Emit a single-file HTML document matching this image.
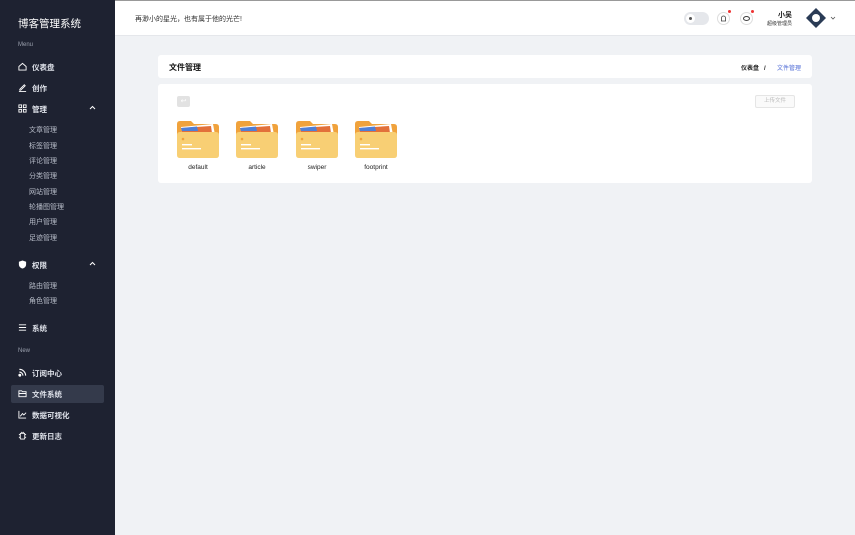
<!DOCTYPE html>
<html><head><meta charset="utf-8"><style>
*{margin:0;padding:0;box-sizing:border-box}
body{width:855px;height:535px;overflow:hidden;background:#f0f2f5;font-family:"Liberation Sans","Noto Sans CJK SC",sans-serif;position:relative}
.sb{position:absolute;left:0;top:0;width:115px;height:535px;background:#1e2231;color:#e6e8ee}
.t{position:absolute;font-size:7px;white-space:nowrap}
.sb .t{color:#dfe2ea}
.it{font-weight:bold;font-size:7.5px}
.sub{color:#b8bdc9!important;left:29px}
.ic{position:absolute;left:18px;width:9px;height:9px}
.top{position:absolute;left:115px;top:0;width:740px;height:36px;background:#fff;border-top:1px solid #999;border-bottom:1px solid #e5e7eb}
.card{position:absolute;background:#fff;border-radius:3px}
.f{position:absolute;top:121px;width:42px;height:38px}
.fl{position:absolute;top:164px;font-size:6.5px;color:#222;width:42px;text-align:center}
.chev{position:absolute;left:89px;width:7px;height:5px}
</style></head><body>
<div class="sb">
<div class="t" style="left:18px;top:16px;font-size:10.5px;color:#fff">博客管理系统</div>
<div class="t" style="left:18px;top:42px;font-size:6px;color:#9aa0ad">Menu</div>
<svg class="ic" style="top:62px" viewBox="0 0 10 10" fill="none" stroke="#fff" stroke-width="1"><path d="M1 5L5 1.5 9 5V9H1Z"/></svg>
<div class="t it" style="left:32px;top:62px">仪表盘</div>
<svg class="ic" style="top:83px" viewBox="0 0 10 10" fill="none" stroke="#fff" stroke-width="1"><path d="M2 7L7 2 8 3 3 8H2ZM1 9.5H9"/></svg>
<div class="t it" style="left:32px;top:83px">创作</div>
<svg class="ic" style="top:104px" viewBox="0 0 10 10" fill="none" stroke="#fff" stroke-width="1"><rect x="1" y="1" width="3" height="3"/><rect x="6" y="1" width="3" height="3"/><rect x="1" y="6" width="3" height="3"/><rect x="6" y="6" width="3" height="3"/></svg>
<div class="t it" style="left:32px;top:104px">管理</div>
<svg class="chev" style="top:105px" viewBox="0 0 7 5" fill="none" stroke="#fff" stroke-width="1"><path d="M1 4L3.5 1.5 6 4"/></svg>
<div class="t sub" style="top:125px">文章管理</div>
<div class="t sub" style="top:141px">标签管理</div>
<div class="t sub" style="top:156px">评论管理</div>
<div class="t sub" style="top:171px">分类管理</div>
<div class="t sub" style="top:187px">网站管理</div>
<div class="t sub" style="top:202px">轮播图管理</div>
<div class="t sub" style="top:217px">用户管理</div>
<div class="t sub" style="top:233px">足迹管理</div>
<svg class="ic" style="top:260px" viewBox="0 0 10 10"><path d="M5 .5L9 2V5C9 7.5 7 9 5 9.5 3 9 1 7.5 1 5V2Z" fill="#fff"/></svg>
<div class="t it" style="left:32px;top:260px">权限</div>
<svg class="chev" style="top:261px" viewBox="0 0 7 5" fill="none" stroke="#fff" stroke-width="1"><path d="M1 4L3.5 1.5 6 4"/></svg>
<div class="t sub" style="top:281px">路由管理</div>
<div class="t sub" style="top:296px">角色管理</div>
<svg class="ic" style="top:323px" viewBox="0 0 10 10" fill="none" stroke="#fff" stroke-width="1"><path d="M1 2H9M1 5H9M1 8H9"/></svg>
<div class="t it" style="left:32px;top:323px">系统</div>
<div class="t" style="left:18px;top:348px;font-size:6px;color:#9aa0ad">New</div>
<svg class="ic" style="top:368px" viewBox="0 0 10 10" fill="none" stroke="#fff" stroke-width="1.2"><path d="M1.5 1.5A7 7 0 0 1 8.5 8.5M1.5 4.5A4 4 0 0 1 5.5 8.5"/><circle cx="2" cy="8" r="1" fill="#fff"/></svg>
<div class="t it" style="left:32px;top:368px">订阅中心</div>
<div style="position:absolute;left:11px;top:385px;width:93px;height:18px;background:#343a4b;border-radius:2px"></div>
<svg class="ic" style="top:389px" viewBox="0 0 10 10" fill="none" stroke="#fff" stroke-width="1"><path d="M1 2H4L5 3H9V8.5H1Z M1 5H9"/></svg>
<div class="t it" style="left:32px;top:389px">文件系统</div>
<svg class="ic" style="top:410px" viewBox="0 0 10 10" fill="none" stroke="#fff" stroke-width="1"><path d="M1 1V9H9M2.5 7L5 4 6.5 5.5 9 3"/></svg>
<div class="t it" style="left:32px;top:410px">数据可视化</div>
<svg class="ic" style="top:431px" viewBox="0 0 10 10" fill="none" stroke="#fff" stroke-width="1"><rect x="2.5" y="2.5" width="5" height="6.5" rx="1"/><path d="M1 4H2.5M7.5 4H9M1 7H2.5M7.5 7H9M4 1L4.5 2.5M6 1L5.5 2.5"/></svg>
<div class="t it" style="left:32px;top:431px">更新日志</div>
</div>
<div class="top">
<div class="t" style="left:20px;top:13px;font-size:7px;color:#333">再渺小的星光，也有属于他的光芒!</div>
<div style="position:absolute;left:569px;top:11px;width:25px;height:13px;border-radius:7px;background:#e5e7eb"><div style="position:absolute;left:2px;top:2px;width:9px;height:9px;border-radius:50%;background:#fff"><div style="position:absolute;left:3px;top:3px;width:3px;height:3px;border-radius:50%;background:#555"></div></div></div>
<div style="position:absolute;left:602px;top:11px;width:13px;height:13px;border-radius:50%;border:1px solid #ddd"></div>
<svg style="position:absolute;left:605px;top:14px" width="7" height="7" viewBox="0 0 7 7" fill="none" stroke="#444" stroke-width=".8"><path d="M1.5 6V3A2 2 0 0 1 5.5 3V6ZM1 6H6"/></svg>
<div style="position:absolute;left:613px;top:9px;width:3px;height:3px;border-radius:50%;background:#e33"></div>
<div style="position:absolute;left:625px;top:11px;width:13px;height:13px;border-radius:50%;border:1px solid #ddd"></div>
<div style="position:absolute;left:628px;top:15px;width:7px;height:5px;border-radius:50%;border:.8px solid #444"></div>
<div style="position:absolute;left:636px;top:9px;width:3px;height:3px;border-radius:50%;background:#e33"></div>
<div class="t" style="left:663px;top:9px;font-size:7px;font-weight:bold;color:#222">小吴</div>
<div class="t" style="left:652px;top:19px;font-size:5px;color:#333">超级管理员</div>
<svg style="position:absolute;left:690px;top:6px" width="22" height="22" viewBox="0 0 22 22"><path d="M11 1L21 11 11 21 1 11Z" fill="#2a3b55"/><circle cx="11" cy="11" r="4" fill="#fff"/></svg>
<svg style="position:absolute;left:715px;top:15px" width="6" height="4" viewBox="0 0 6 4" fill="none" stroke="#555" stroke-width=".8"><path d="M1 1L3 3 5 1"/></svg>
</div>
<div class="card" style="left:158px;top:55px;width:654px;height:23px">
<div class="t" style="left:11px;top:7px;font-size:8px;font-weight:bold;color:#111">文件管理</div>
<div class="t" style="left:583px;top:8px;font-size:6px;color:#222;font-weight:bold">仪表盘 &nbsp; /</div>
<div class="t" style="left:619px;top:8px;font-size:6px;color:#4f6bd6">文件管理</div>
</div>
<div class="card" style="left:158px;top:84px;width:654px;height:99px">
<div style="position:absolute;left:19px;top:12px;width:13px;height:11px;background:#e2e2e2;border-radius:2px;color:#fff;font-size:7px;text-align:center;line-height:11px">↩</div>
<div style="position:absolute;left:597px;top:11px;width:40px;height:13px;border:1px solid #e5e5e5;background:#fafafa;border-radius:2px;font-size:5.5px;color:#bbb;text-align:center;line-height:11px">上传文件</div>
</div>
<svg width="0" height="0" style="position:absolute"><defs><g id="fd"><path d="M0 3Q0 0 3 0H14L17 3H39Q42 3 42 6V34H0Z" fill="#f0a23c"/><path d="M4 6L36 3 38 14H5Z" fill="#fff"/><path d="M4 7L34 5 35 12H5Z" fill="#e2703a"/><path d="M4 7L20 5.5 21 10H5Z" fill="#4f7fd6"/><path d="M0 14Q0 11 3 11H39Q42 11 42 14V34Q42 37 39 37H3Q0 37 0 34Z" fill="#f8cf74"/><circle cx="6" cy="18" r="1.3" fill="#f0a23c"/><rect x="5" y="23" width="10" height="1.4" fill="#fff"/><rect x="5" y="27" width="19" height="1.4" fill="#fff"/></g></defs></svg>
<svg class="f" style="left:177px" viewBox="0 0 42 38"><use href="#fd"/></svg>
<svg class="f" style="left:236px" viewBox="0 0 42 38"><use href="#fd"/></svg>
<svg class="f" style="left:296px" viewBox="0 0 42 38"><use href="#fd"/></svg>
<svg class="f" style="left:355px" viewBox="0 0 42 38"><use href="#fd"/></svg>
<div class="fl" style="left:177px">default</div>
<div class="fl" style="left:236px">article</div>
<div class="fl" style="left:296px">swiper</div>
<div class="fl" style="left:355px">footprint</div>
</body></html>
